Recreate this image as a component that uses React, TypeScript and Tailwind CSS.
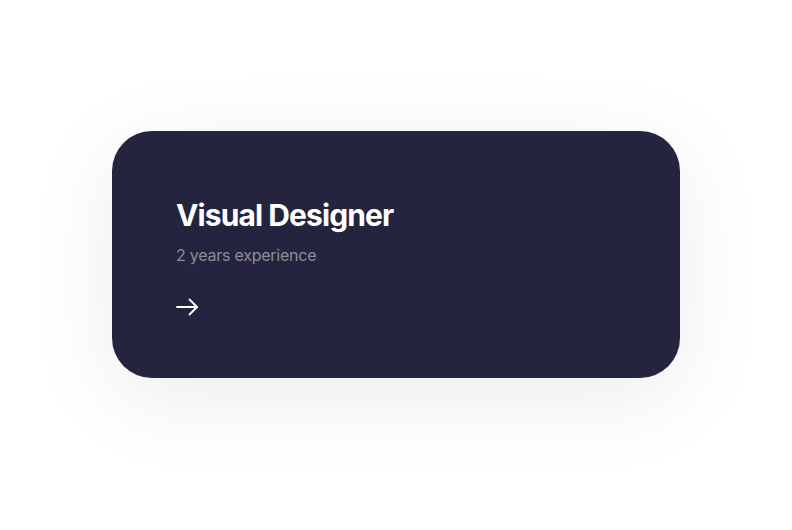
import React from "react";

const App = () => {
  return (
    <div className="min-h-screen w-full bg-white flex items-center justify-center pb-[21px] font-['Inter',sans-serif]">
      <div className="w-[568px] h-[247px] rounded-[40px] bg-[#24243f] shadow-[0_20px_90px_rgba(0,0,0,0.08)] px-16 pt-[66px] flex flex-col">
        <h2 className="text-[30px] leading-[36px] font-bold tracking-[-0.03em] text-white">Visual Designer</h2>
        <p className="mt-[10px] text-[16px] leading-6 tracking-[-0.015em] text-[#8e8e98]">2 years experience</p>
        <div className="mt-[28px] h-[24px] flex items-center">
          <svg width="23" height="18" viewBox="0 0 23 18" fill="none" stroke="white" strokeWidth="1.8" strokeLinecap="round" strokeLinejoin="round">
            <path d="M1 9h20" />
            <path d="M13.5 1.5L21 9l-7.5 7.5" />
          </svg>
        </div>
      </div>
    </div>
  );
};

export default App;
